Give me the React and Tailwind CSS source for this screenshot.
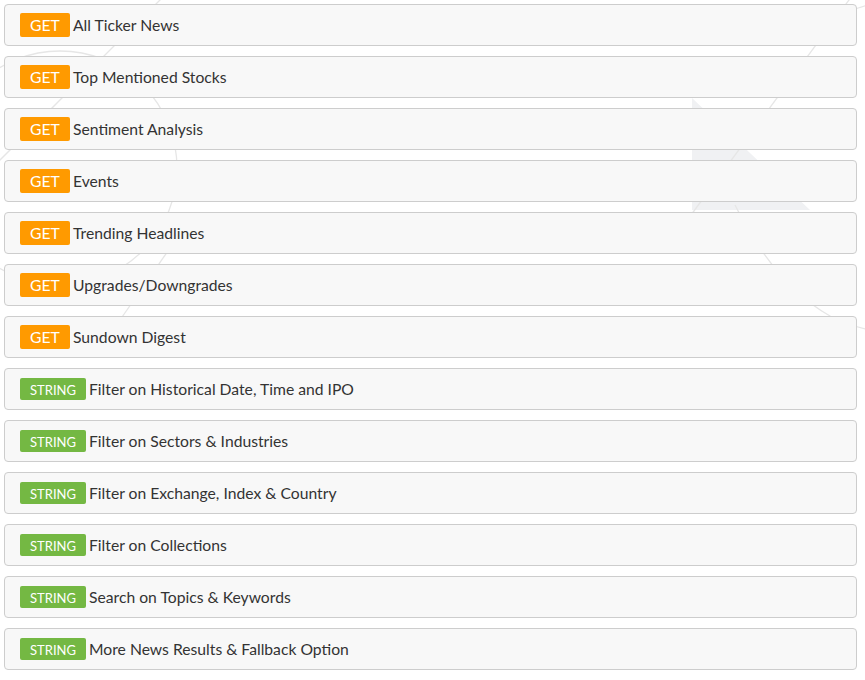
const rows = [
  { method: "GET", title: "All Ticker News" },
  { method: "GET", title: "Top Mentioned Stocks" },
  { method: "GET", title: "Sentiment Analysis" },
  { method: "GET", title: "Events" },
  { method: "GET", title: "Trending Headlines" },
  { method: "GET", title: "Upgrades/Downgrades" },
  { method: "GET", title: "Sundown Digest" },
  { method: "STRING", title: "Filter on Historical Date, Time and IPO" },
  { method: "STRING", title: "Filter on Sectors & Industries" },
  { method: "STRING", title: "Filter on Exchange, Index & Country" },
  { method: "STRING", title: "Filter on Collections" },
  { method: "STRING", title: "Search on Topics & Keywords" },
  { method: "STRING", title: "More News Results & Fallback Option" },
];

// faint decorative lines behind the list
function Backdrop() {
  return (
    <svg className="absolute inset-0 w-full h-full pointer-events-none" viewBox="0 0 865 680" fill="none">
      <polygon points="692,98 810,210 692,210" fill="#f0f1f3" />
      <circle cx="60" cy="168" r="117" stroke="#e6e6e6" strokeWidth="1.3" />
      <line x1="166" y1="-6" x2="-10" y2="170" stroke="#e6e6e6" strokeWidth="1.3" />
      <line x1="860" y1="-15" x2="680" y2="230" stroke="#e6e6e6" strokeWidth="1.3" />
      <line x1="855" y1="9" x2="868" y2="5" stroke="#e6e6e6" strokeWidth="1.3" />
      <path d="M735 205 Q775 285 830 316 Q850 326 870 330" stroke="#e6e6e6" strokeWidth="1.3" />
      <line x1="170" y1="248" x2="120" y2="320" stroke="#e6e6e6" strokeWidth="1.3" />
    </svg>
  );
}

export default function App() {
  return (
    <div className="relative w-[865px] h-[680px] bg-white overflow-hidden" style={{ fontFamily: "Lato, 'Open Sans', sans-serif" }}>
      <Backdrop />
      <div className="relative flex flex-col gap-[10px] pt-[4px] pl-[4px] w-[857px]">
        {rows.map((r) => (
          <div key={r.title} className="h-[42px] flex items-center gap-[3px] pl-[15px] bg-[#f8f8f8] border border-[#cdcdcd] rounded-[4px]">
            {r.method === "GET" ? (
              <span className="h-[24px] w-[50px] flex items-center justify-center pt-[2px] rounded-[2px] bg-[#ff9a00] text-white text-[15.7px]">GET</span>
            ) : (
              <span className="h-[22px] w-[66px] flex items-center justify-center pt-[2px] rounded-[2px] bg-[#74b843] text-white text-[13px] leading-none">STRING</span>
            )}
            <span className="mt-[2px] text-[15.7px] text-[#333]">{r.title}</span>
          </div>
        ))}
      </div>
    </div>
  );
}
